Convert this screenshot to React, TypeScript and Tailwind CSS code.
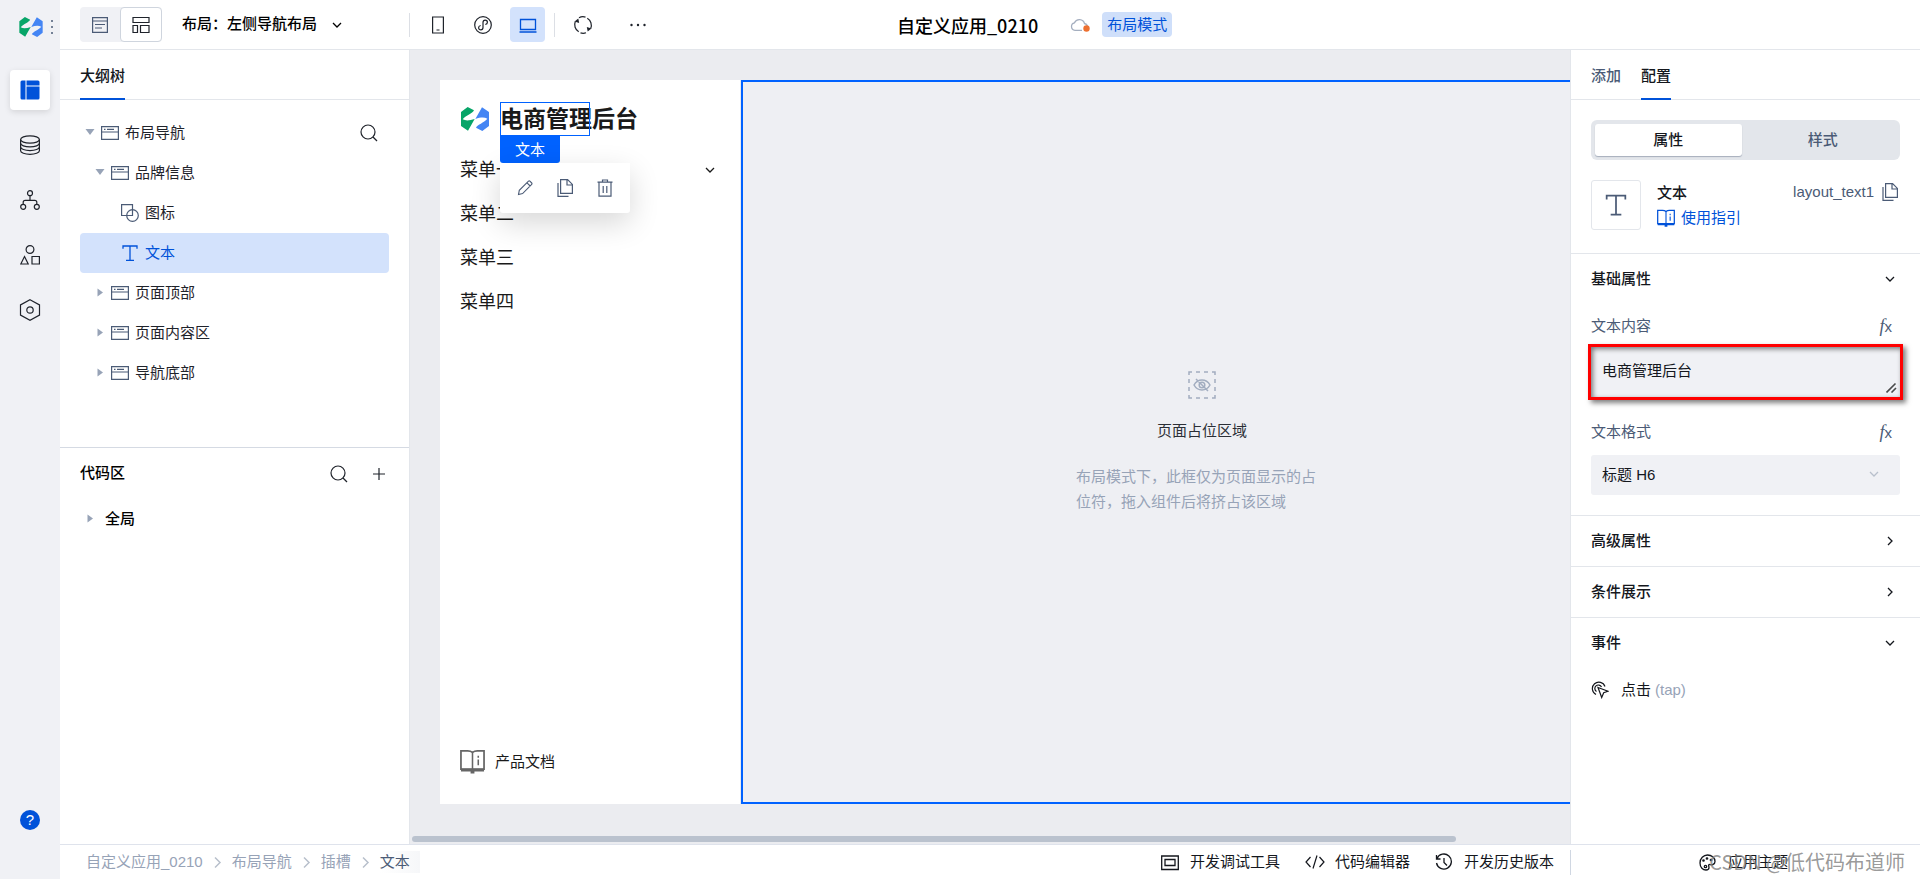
import clsx from 'clsx';
import React from 'react';

type IconProps = {
  className?: string;
};

type SvgProps = IconProps & {
  size?: number;
  stroke?: number;
  children: React.ReactNode;
};

const Svg = ({ size = 20, stroke = 1.2, className, children }: SvgProps) => (
  <svg
    width={size}
    height={size}
    viewBox={`0 0 ${size} ${size}`}
    fill="none"
    stroke="currentColor"
    strokeWidth={stroke}
    className={clsx('shrink-0', className)}
    aria-hidden="true"
  >
    {children}
  </svg>
);

const Logo = ({ className }: IconProps) => (
  <svg viewBox="0 0 84 72" className={clsx('shrink-0', className)} aria-hidden="true">
    <path d="M0 15L20 0l19 10C34 20 16 24 5 37c9 5 21 4 36-1L21 71 0 57z" fill="#07a568" />
    <path d="M84 57L64 72 45 62c5-10 23-14 34-27-9-5-21-4-36 1L63 1l21 14z" fill="#4485f4" />
  </svg>
);

const SearchIcon = () => (
  <Svg size={18}>
    <circle cx="8" cy="8" r="7" />
    <path d="M13 13l4 4" />
  </Svg>
);

const ContainerIcon = ({ className }: IconProps) => (
  <Svg size={18} className={className}>
    <path d="M.6 2.600h16.800v12.800H.6zM.6 8h16.800" />
    <path d="M3 5.400h1.500M6 5.400h7" />
  </Svg>
);

const ShapesIcon = ({ className }: IconProps) => (
  <Svg size={18} className={className}>
    <path d="M6 11.500H.6V.6h10.900V6" />
    <circle cx="11.500" cy="11.500" r="5.800" />
    <path d="M6 11.500h5.500V6" />
  </Svg>
);

const TextIcon = ({ className, size = 18 }: IconProps & { size?: number }) => (
  <svg
    width={size}
    height={size}
    viewBox="0 0 18 18"
    fill="none"
    stroke="currentColor"
    strokeWidth="1.300"
    className={clsx('shrink-0', className)}
    aria-hidden="true"
  >
    <path d="M2 4.800V2h14v2.800M9 2v14.300M5 16.300h8" />
  </svg>
);

const CopyIcon = ({ className }: IconProps) => (
  <Svg size={18} className={className}>
    <path d="M4.600 .6h7l4.800 4.800v9H4.600zM11 .6v5.400h5.400" />
    <path d="M2 4v13.400h10.500" />
  </Svg>
);

const GuideIcon = ({ className }: IconProps) => (
  <svg viewBox="0 0 26 26" fill="none" stroke="currentColor" className={clsx('shrink-0', className)} aria-hidden="true">
    <path d="M13 3.500C11 2 9 2 8 2H1v19h24V2h-7c-1 0-3 0-5 1.500z" strokeWidth="1.800" />
    <path d="M13 3v18M19 11v6M19 7v2" strokeWidth="1.600" />
    <path d="M1 22h24M11 24h4" strokeWidth="3" />
  </svg>
);

const ChevronDown = ({ className }: IconProps) => (
  <Svg size={10} className={className} stroke={1.3}>
    <path d="M1 3l4 4 4-4" />
  </Svg>
);

const ChevronRight = ({ className }: IconProps) => (
  <Svg size={10} className={className} stroke={1.3}>
    <path d="M3 1l4 4-4 4" />
  </Svg>
);

const Caret = ({ open }: { open?: boolean }) => (
  <svg width="10" height="10" viewBox="0 0 10 10" fill="#97a3b7" className="shrink-0" aria-hidden="true">
    {open ? <path d="M.5 1h9L5 7z" /> : <path d="M2.500 .5v8L8 4.500z" />}
  </svg>
);

const railItems = [
  {
    label: '数据源',
    icon: (
      <Svg>
        <ellipse cx="10" cy="4.500" rx="9.400" ry="3.700" />
        <path d="M.6 4.500v11.200c0 2 4.200 3.600 9.400 3.600s9.400-1.600 9.400-3.600V4.500" />
        <path d="M.6 8.300c0 2 4.200 3.600 9.400 3.600s9.400-1.600 9.400-3.600M.6 12c0 2 4.200 3.600 9.400 3.600s9.400-1.600 9.400-3.600" />
      </Svg>
    ),
  },
  {
    label: '流程',
    icon: (
      <Svg>
        <circle cx="10" cy="3.200" r="2.500" />
        <circle cx="3.200" cy="16.800" r="2.500" />
        <circle cx="16.800" cy="16.800" r="2.500" />
        <path d="M10 5.700v4.600M3.200 14.300v-2c0-1.200.8-2 2-2h9.600c1.200 0 2 .8 2 2v2" />
      </Svg>
    ),
  },
  {
    label: '组件',
    icon: (
      <Svg>
        <circle cx="10" cy="4.500" r="3.900" />
        <path d="M4.500 11.600L8.200 19H.8zM12 11.500h7.400V19H12z" />
      </Svg>
    ),
  },
  {
    label: '设置',
    icon: (
      <Svg size={22}>
        <path d="M11 .7l9.500 5.200v10.200L11 21.300 1.500 16.100V5.900z" />
        <circle cx="11" cy="11" r="3.200" />
      </Svg>
    ),
  },
];

const Rail = () => (
  <aside className="flex w-[60px] shrink-0 flex-col items-center bg-[#f0f1f5] pb-[49px]">
    <div className="flex h-[54px] w-full items-center gap-2 pl-[19px]">
      <Logo className="h-5 w-6" />
      <svg width="2" height="16" viewBox="0 0 2 16" fill="#4b5b76" aria-hidden="true">
        <circle cx="1" cy="2" r="1" />
        <circle cx="1" cy="8" r="1" />
        <circle cx="1" cy="14" r="1" />
      </svg>
    </div>
    <nav className="mt-4 flex flex-col gap-[15px]">
      <button
        aria-label="页面设计"
        className="flex size-10 items-center justify-center rounded bg-white text-[#0052d9] shadow-[0_2px_6px_rgba(0,0,0,0.12)]"
      >
        <svg width="20" height="20" viewBox="0 0 20 20" fill="currentColor" aria-hidden="true">
          <path d="M2 .5h3.500v19H2A1.500 1.500 0 01.5 18V2A1.500 1.500 0 012 .5zM6.500 .5H18A1.500 1.500 0 0119.500 2v3.500h-13zM6.500 6.500h13V18a1.500 1.500 0 01-1.500 1.500H6.500z" />
        </svg>
      </button>
      {railItems.map((item) => (
        <button
          key={item.label}
          aria-label={item.label}
          className="flex size-10 items-center justify-center text-[#1f232b]"
        >
          {item.icon}
        </button>
      ))}
    </nav>
    <button
      aria-label="帮助"
      className="mt-auto flex size-5 items-center justify-center rounded-full bg-[#0052d9] text-[15px] leading-5 text-white"
    >
      ?
    </button>
  </aside>
);

const Header = () => (
  <header className="flex h-[50px] shrink-0 items-center border-b border-[#e3e6eb] bg-white">
    <div className="flex w-[45%] items-center pl-5">
      <div className="flex h-[35px] rounded bg-[#f0f1f5]">
        <button aria-label="页面" className="flex w-10 items-center justify-center text-[#4b5b76]">
          <Svg size={16}>
            <path d="M.6 .6h14.800v14.800H.6zM.6 4h14.800M3 7.500h10M3 11h7" />
          </Svg>
        </button>
        <button
          aria-label="布局"
          className="flex w-[42px] items-center justify-center rounded border border-[#cfd5de] bg-white text-[#1f232b]"
        >
          <Svg size={18} stroke={1.2}>
            <path d="M1 1.500h16v5H1zM1 9.500h4.500v7H1zM8.500 9.500H17v7H8.500z" />
          </Svg>
        </button>
      </div>
      <button className="ml-5 flex items-center gap-[15px] text-[15px] font-medium text-black">
        布局：左侧导航布局
        <ChevronDown />
      </button>
      <div className="ml-[67px] h-6 w-px bg-[#dcdfe5]" />
      <div className="ml-[10px] flex items-center gap-[10px] text-[#1f232b]">
        <button aria-label="手机" className="flex size-[35px] items-center justify-center">
          <Svg size={18}>
            <path d="M3.600 1h10.800v16H3.600zM7.500 14h3" />
          </Svg>
        </button>
        <button aria-label="小程序" className="flex size-[35px] items-center justify-center">
          <Svg size={18}>
            <circle cx="9" cy="9" r="8.300" />
            <path d="M9 11.500V6.500c0-1.500 1-2.300 2.200-2.300s2.200.9 2.200 2.100-.9 2-2.100 2.200M9 6.500v5c0 1.500-1 2.300-2.200 2.300s-2.200-.9-2.200-2.100.9-2 2.100-2.200" />
          </Svg>
        </button>
        <button
          aria-label="电脑"
          className="flex size-[35px] items-center justify-center rounded bg-[#d3e2fc] text-[#0052d9]"
        >
          <Svg size={18} stroke={1.300}>
            <path d="M1.500 3.500h15v10h-15zM.5 16h17" />
          </Svg>
        </button>
      </div>
      <div className="ml-[9px] h-6 w-px bg-[#dcdfe5]" />
      <button aria-label="刷新" className="ml-[18px] text-[#1f232b]">
        <Svg>
          <path d="M2.300 6.500a8.300 8.300 0 003.400 10.300M7.500 17.900a8.300 8.300 0 005.500 -.1M17.700 13.500A8.300 8.300 0 0014.300 3.200M12.500 2.100a8.300 8.300 0 00-6.500 .6" />
          <path d="M1.500 6.500l3.800-3 .9 4.500zM18.500 13.500l-3.800 3-.9-4.500z" fill="currentColor" stroke="none" />
        </Svg>
      </button>
      <button aria-label="更多" className="ml-9 text-[#1f232b]">
        <svg width="18" height="18" viewBox="0 0 18 18" fill="currentColor" aria-hidden="true">
          <circle cx="2.500" cy="9" r="1.200" />
          <circle cx="9" cy="9" r="1.200" />
          <circle cx="15.500" cy="9" r="1.200" />
        </svg>
      </button>
    </div>
    <h1 className="font-['Noto_Sans_CJK_SC',sans-serif] text-[18px] leading-6 font-medium text-black">
      自定义应用_0210
    </h1>
    <svg width="20" height="16" viewBox="0 0 20 16" fill="none" className="ml-8" aria-hidden="true">
      <path d="M12 13.300H5A3.800 3.800 0 014.500 5.800 5.300 5.300 0 0114.500 6.500c1.500.3 2.500 1 3 2.500" stroke="#a4aebf" strokeWidth="1.300" />
      <circle cx="16.500" cy="11.500" r="3.200" fill="#ed7030" />
    </svg>
    <span className="ml-3 rounded bg-[#cfdffa] px-[5px] text-[15px] leading-[25px] text-[#0052d9]">布局模式</span>
  </header>
);

type TreeNode = {
  label: string;
  kind: 'container' | 'shape' | 'text';
  pad: string;
  open?: boolean;
  leaf?: boolean;
  active?: boolean;
};

const tree: TreeNode[] = [
  { label: '布局导航', kind: 'container', pad: 'pl-[5px]', open: true },
  { label: '品牌信息', kind: 'container', pad: 'pl-[15px]', open: true },
  { label: '图标', kind: 'shape', pad: 'pl-[41px]', leaf: true },
  { label: '文本', kind: 'text', pad: 'pl-[41px]', leaf: true, active: true },
  { label: '页面顶部', kind: 'container', pad: 'pl-[15px]' },
  { label: '页面内容区', kind: 'container', pad: 'pl-[15px]' },
  { label: '导航底部', kind: 'container', pad: 'pl-[15px]' },
];

const OutlinePanel = () => (
  <section className="flex w-[350px] shrink-0 flex-col border-r border-[#e3e6eb] bg-white">
    <div className="flex h-[50px] shrink-0 items-stretch border-b border-[#e3e6eb] px-5">
      <button className="-mb-px border-b-2 border-[#0052d9] pt-1 text-[15px] font-medium text-[#14171d]">大纲树</button>
    </div>
    <ul className="mt-[13px] pr-5 pl-5">
      {tree.map((node) => (
        <li
          key={node.label}
          className={clsx(
            'flex h-10 items-center rounded text-[15px]',
            node.active ? 'bg-[#d3e2fc] text-[#0052d9]' : 'text-[#1f232b]',
          )}
        >
          <button className={clsx('flex h-full flex-1 items-center', node.pad)}>
            {!node.leaf && (
              <span className="mr-[6px]">
                <Caret open={node.open} />
              </span>
            )}
            {node.kind === 'container' && <ContainerIcon className="text-[#4b5b76]" />}
            {node.kind === 'shape' && <ShapesIcon className="text-[#4b5b76]" />}
            {node.kind === 'text' && <TextIcon />}
            <span className="ml-[6px]">{node.label}</span>
          </button>
          {node.label === '布局导航' && (
            <button aria-label="搜索组件" className="mr-[11px]">
              <SearchIcon />
            </button>
          )}
        </li>
      ))}
    </ul>
    <div className="mt-[54px] flex flex-1 flex-col border-t border-[#d5dae3] px-5">
      <div className="flex h-[51px] items-center text-[#1f232b]">
        <h2 className="flex-1 text-[15px] font-medium text-black">代码区</h2>
        <button aria-label="搜索代码" className="mr-[25px]">
          <SearchIcon />
        </button>
        <button aria-label="新建" className="mr-1">
          <Svg size={12}>
            <path d="M6 0v12M0 6h12" />
          </Svg>
        </button>
      </div>
      <button className="flex h-10 items-center gap-[10px] pl-[5px] text-[15px] font-medium text-black">
        <Caret />
        全局
      </button>
    </div>
  </section>
);

const SelectionTools = () => (
  <div className="absolute top-full left-0 z-10">
    <div className="w-[60px] rounded-b-[3px] bg-[#0062ff] text-center text-[15px] leading-[27px] font-normal text-white">
      文本
    </div>
    <div className="flex h-[50px] w-[130px] items-center justify-between rounded-b-[3px] bg-white px-4 text-[#4b5b76] shadow-[0_10px_30px_rgba(0,0,0,0.16)]">
      <button aria-label="编辑">
        <Svg size={18} stroke={1.1}>
          <path d="M2.500 15.500l.8-4.200L12.500 2.200c.4-.4 1-.4 1.400 0l1.800 1.800c.4.4.4 1 0 1.400l-9.100 9.200zM11 3.800l3.200 3.200" />
        </Svg>
      </button>
      <button aria-label="复制">
        <CopyIcon />
      </button>
      <button aria-label="删除">
        <Svg size={18}>
          <path d="M1.500 3.200h15M3 3.200v14h12v-14M6.500 3.200V1h5v2.200M7.200 7v7M10.800 7v7" />
        </Svg>
      </button>
    </div>
  </div>
);

const menus = ['菜单一', '菜单二', '菜单三', '菜单四'];

const Canvas = () => (
  <main className="flex min-w-0 flex-1 flex-col overflow-hidden bg-[#ebecf0] pt-[30px] pb-0.5">
    <div className="ml-[30px] flex w-[calc(100%+63px)] flex-1 gap-px">
      <div className="flex w-[300px] shrink-0 flex-col bg-white px-5 pt-[22px] pb-[30px] text-[#1a1a1a]">
        <div className="flex items-center">
          <Logo className="ml-px h-6 w-7" />
          <div className="relative ml-[11px] flex-1">
            <h2 className="text-[23px] leading-[34px] font-bold">电商管理后台</h2>
            <div className="absolute inset-y-0 left-0 w-[90px] border border-[#0062ff]" />
            <SelectionTools />
          </div>
        </div>
        <ul className="mt-3 text-[18px]">
          {menus.map((menu, index) => (
            <li key={menu} className="flex h-11 items-center justify-between pr-[5px]">
              <a href="#menu">{menu}</a>
              {index === 0 && <ChevronDown />}
            </li>
          ))}
        </ul>
        <a href="#docs" className="mt-auto flex items-center gap-[10px] text-[15px] leading-6">
          <GuideIcon className="size-[25px] text-[#666666]" />
          产品文档
        </a>
      </div>
      <div className="flex flex-1 flex-col items-center justify-center border-2 border-[#0062ff] bg-[#eeeff3]">
        <svg width="28" height="28" viewBox="0 0 28 28" fill="none" stroke="#a2adc0" aria-hidden="true">
          <path d="M1 4V1h3M8 1h4M16 1h4M24 1h3v3M27 8v4M27 16v4M27 24v3h-3M20 27h-4M12 27H8M4 27H1v-3M1 20v-4M1 12V8" strokeWidth="1.500" />
          <path d="M6 14c2-3.500 5-5 8-5s6 1.500 8 5c-2 3.500-5 5-8 5s-6-1.500-8-5zM8 8l12 12" strokeWidth="1.500" />
          <circle cx="14" cy="14" r="2.800" strokeWidth="1.500" />
        </svg>
        <h3 className="mt-5 text-[15px] leading-6 text-[#2b2f36]">页面占位区域</h3>
        <p className="mt-[21px] w-[252px] text-[15px] leading-[25px] text-[#97a3b7]">
          布局模式下，此框仅为页面显示的占位符，拖入组件后将挤占该区域
        </p>
      </div>
    </div>
    <div className="mt-8 ml-0.5 h-[6px] w-[90%] rounded-full bg-[#bac2ce]" />
  </main>
);

const FxButton = ({ label }: { label: string }) => (
  <button aria-label={label} className="mr-2 flex h-6 items-baseline text-[#4b5b76]">
    <span className="font-['Liberation_Serif',serif] text-[18px] leading-6 italic">f</span>
    <span className="text-[15px] leading-6">x</span>
  </button>
);

const SectionTitle = ({ title, open }: { title: string; open?: boolean }) => (
  <button className="flex h-[50px] w-full items-center justify-between pr-[5px] text-[15px] font-medium text-[#14171d]">
    {title}
    {open ? <ChevronDown /> : <ChevronRight />}
  </button>
);

const ConfigPanel = () => (
  <aside className="flex w-[350px] shrink-0 flex-col border-l border-[#e3e6eb] bg-white text-[15px]">
    <div className="flex h-[50px] shrink-0 items-stretch gap-5 border-b border-[#e3e6eb] px-5 font-medium">
      <button className="-mb-px border-b-2 border-transparent pt-1 text-[#4b5b76]">添加</button>
      <button className="-mb-px border-b-2 border-[#0052d9] pt-1 text-[#14171d]">配置</button>
    </div>
    <div className="px-5 pt-5 pb-[23px]">
      <div className="flex h-10 rounded-md bg-[#e3e6eb] p-1 font-medium">
        <button className="h-8 flex-1 rounded-[3px] bg-white text-[#14171d] shadow-[0_1px_1px_rgba(75,91,118,0.4)]">
          属性
        </button>
        <button className="h-8 flex-1 pl-2 text-[#4b5b76]">样式</button>
      </div>
      <div className="mt-5 flex">
        <div className="flex size-[50px] items-center justify-center rounded-[3px] border border-[#e3e6eb] text-[#4b5b76]">
          <TextIcon size={24} />
        </div>
        <div className="ml-4 flex-1">
          <h2 className="leading-[25px] font-medium text-[#14171d]">文本</h2>
          <a href="#guide" className="flex items-center gap-[6px] leading-[25px] text-[#0052d9]">
            <GuideIcon className="size-[18px]" />
            使用指引
          </a>
        </div>
        <div className="flex h-6 items-center gap-[7px] pr-px text-[#4b5b76]">
          layout_text1
          <button aria-label="复制标识">
            <CopyIcon />
          </button>
        </div>
      </div>
    </div>
    <section className="border-t border-[#e3e6eb] px-5 pb-5">
      <SectionTitle title="基础属性" open />
      <div className="mt-[10px] flex h-6 items-center justify-between">
        <label htmlFor="content" className="leading-6 text-[#4b5b76]">
          文本内容
        </label>
        <FxButton label="绑定文本内容" />
      </div>
      <div className="relative -mx-[3px] mt-[6px] flex border-[3px] border-[#ff0000] bg-[#f0f1f5] shadow-[3px_3px_5px_rgba(0,0,0,0.5),inset_2px_2px_5px_rgba(0,0,0,0.5)]">
        <textarea
          id="content"
          rows={1}
          defaultValue="电商管理后台"
          className="h-[50px] flex-1 resize-none overflow-hidden px-[11px] pt-3 leading-6 text-[#14171d] outline-none"
        />
        <Svg size={11} stroke={1.6} className="absolute right-[3px] bottom-1 text-[#4a4a4a]">
          <path d="M.5 10.500l9-9M5.500 10.500l4.500-4.500" />
        </Svg>
      </div>
      <div className="mt-5 flex h-6 items-center justify-between">
        <label htmlFor="format" className="leading-6 text-[#4b5b76]">
          文本格式
        </label>
        <FxButton label="绑定文本格式" />
      </div>
      <div className="relative mt-[11px]">
        <select
          id="format"
          className="block h-10 w-full appearance-none rounded-[3px] bg-[#f0f1f5] px-[11px] text-[#14171d] outline-none"
        >
          <option>标题 H6</option>
        </select>
        <ChevronDown className="pointer-events-none absolute top-[14px] right-[21px] text-[#b8c0cc]" />
      </div>
    </section>
    <section className="border-t border-[#e3e6eb] px-5">
      <SectionTitle title="高级属性" />
    </section>
    <section className="border-t border-[#e3e6eb] px-5">
      <SectionTitle title="条件展示" />
    </section>
    <section className="border-t border-[#e3e6eb] px-5">
      <SectionTitle title="事件" open />
      <button className="mt-[10px] flex items-center leading-6 text-[#14171d]">
        <Svg size={18} stroke={1.2} className="mr-3">
          <path d="M5 13.500A6.500 6.500 0 1114 5.500M5.500 10.500a3.500 3.500 0 115-4.500" />
          <path d="M7 6.500l10 3.800-4.300 1.500-2 4.700z" />
        </Svg>
        点击<span className="ml-1 text-[#97a3b7]">(tap)</span>
      </button>
    </section>
  </aside>
);

const crumbs = ['自定义应用_0210', '布局导航', '插槽'];

const Footer = () => (
  <footer className="flex h-[35px] shrink-0 items-center border-t border-[#dfe3ec] bg-white text-[15px] text-[#14171d]">
    <nav className="flex items-center pl-[26px] text-[#97a3b7]">
      {crumbs.map((crumb) => (
        <React.Fragment key={crumb}>
          <a href="#crumb">{crumb}</a>
          <Svg size={13} stroke={1.5} className="mx-2 text-[#b8c0cc]">
            <path d="M4 1.500l5 5-5 5" />
          </Svg>
        </React.Fragment>
      ))}
      <a href="#crumb" className="bg-linear-to-r from-white to-[#f6f7f9] pr-[10px] text-[#4b5b76]">
        文本
      </a>
    </nav>
    <div className="ml-auto flex items-center gap-[25px] pr-4">
      <button className="flex items-center gap-[11px]">
        <Svg size={18} stroke={1.3}>
          <path d="M.7 3h16.600v13.500H.7zM4 6.500h10v6H4z" />
        </Svg>
        开发调试工具
      </button>
      <button className="flex items-center gap-[10px]">
        <Svg>
          <path d="M5.500 5L1 10l4.500 5M14.500 5l4.500 5-4.500 5M12 3.500l-4 13" />
        </Svg>
        代码编辑器
      </button>
      <button className="flex items-center gap-[11px]">
        <Svg size={18} stroke={1.3}>
          <path d="M2 5.500A7.500 7.500 0 111.500 10M1.500 2v4h4M9 5v4.500l3 3" />
        </Svg>
        开发历史版本
      </button>
    </div>
    <div className="relative flex h-[25px] w-[350px] items-center justify-center border-l border-[#d0d7e2]">
      <button className="flex items-center gap-3 pr-1">
        <Svg size={17} stroke={1.3}>
          <path d="M10.500 10.500c2.500.8 5.500-.2 5.500-3C16 3.800 12.500 1 8.500 1S1 4.500 1 9s3 7 6 7c2 0 3-1 3-2.500 0-1-.8-2-.3-2.600.2-.3.500-.4.800-.4z" />
          <circle cx="4.500" cy="6.500" r=".7" />
          <circle cx="8" cy="4.500" r=".7" />
          <circle cx="12" cy="6" r=".7" />
          <circle cx="6.500" cy="12.500" r="1.200" />
        </Svg>
        应用主题
      </button>
      <span className="pointer-events-none absolute right-[15px] font-['Noto_Sans_CJK_SC',sans-serif] text-[20px] leading-6 whitespace-nowrap text-[#808080]/80">
        CSDN @低代码布道师
      </span>
    </div>
  </footer>
);

const App = () => {
  return (
    <div className="flex h-screen overflow-hidden font-['Liberation_Sans','Noto_Sans_CJK_SC',sans-serif]">
      <Rail />
      <div className="flex min-w-0 flex-1 flex-col">
        <Header />
        <div className="flex min-h-0 flex-1">
          <OutlinePanel />
          <Canvas />
          <ConfigPanel />
        </div>
        <Footer />
      </div>
    </div>
  );
};

export default App;
